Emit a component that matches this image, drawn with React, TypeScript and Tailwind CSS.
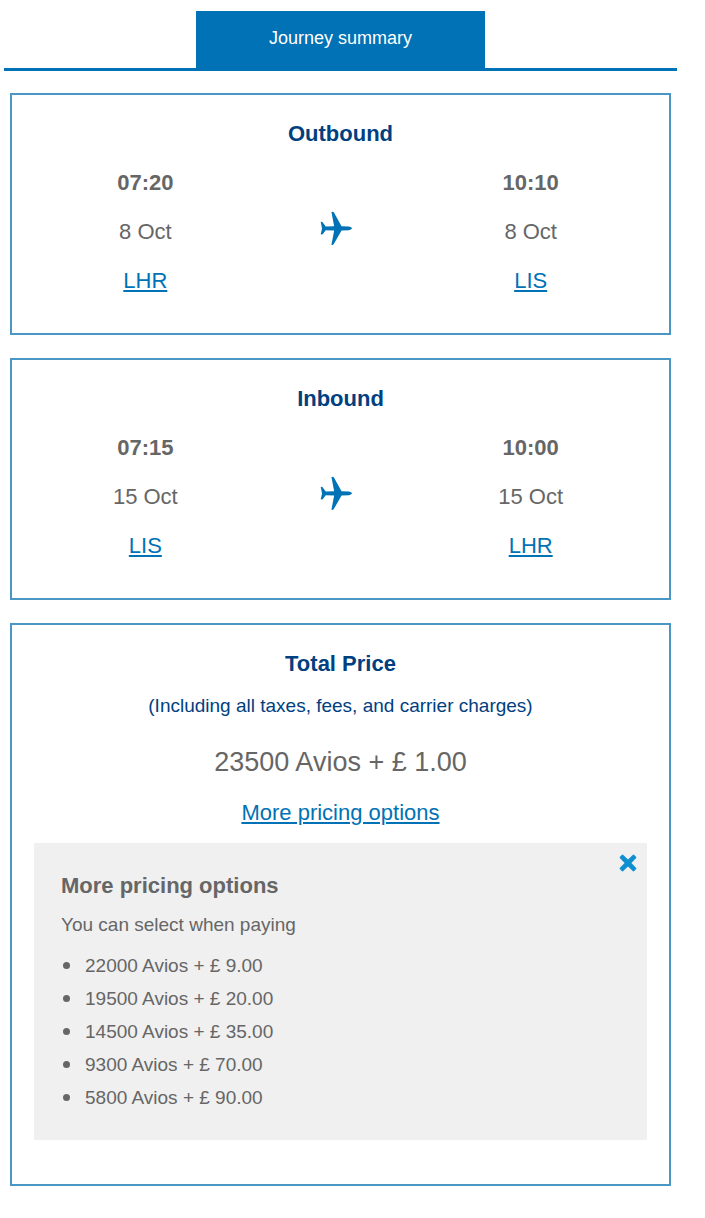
import React, { useState } from 'react';

type Stop = {
  time: string;
  date: string;
  airport: string;
};

type Leg = {
  title: string;
  from: Stop;
  to: Stop;
};

const legs: Leg[] = [
  {
    title: 'Outbound',
    from: { time: '07:20', date: '8 Oct', airport: 'LHR' },
    to: { time: '10:10', date: '8 Oct', airport: 'LIS' },
  },
  {
    title: 'Inbound',
    from: { time: '07:15', date: '15 Oct', airport: 'LIS' },
    to: { time: '10:00', date: '15 Oct', airport: 'LHR' },
  },
];

const pricingOptions = [
  '22000 Avios + £ 9.00',
  '19500 Avios + £ 20.00',
  '14500 Avios + £ 35.00',
  '9300 Avios + £ 70.00',
  '5800 Avios + £ 90.00',
];

const PlaneIcon = () => (
  <svg viewBox="60 34 98 104" className="w-[33px] h-[35px] fill-[#0072b5]" aria-hidden="true">
    <path d="M62 66 L67 67 L77 80 L102 79 L94 37 Q97 35 101 38 L124 79 L146 80 Q155 82 155 85.500 Q155 89 146 91 L124 92 L101 132 Q97 137 94 134 L102 92 L77 91 L68 103 L62 104 L66 86 Z" />
  </svg>
);

const CloseIcon = () => (
  <svg viewBox="0 0 18 18" className="w-[18px] h-[18px] fill-[#108fd0]" aria-hidden="true">
    <path d="M4 .8 L9 5.600 L14 .8 Q14.500 .4 15 .8 L17.200 3 Q17.600 3.500 17.200 4 L12.400 9 L17.200 14 Q17.600 14.500 17.200 15 L15 17.200 Q14.500 17.600 14 17.200 L9 12.400 L4 17.200 Q3.500 17.600 3 17.200 L.8 15 Q.4 14.500 .8 14 L5.600 9 L.8 4 Q.4 3.500 .8 3 L3 .8 Q3.500 .4 4 .8 Z" />
  </svg>
);

const Card: React.FC<React.PropsWithChildren<{ title: string }>> = ({ title, children }) => (
  <section className="border-2 border-[#4a96c4] pt-[25px] text-center">
    <h2 className="text-[22px] leading-7 font-bold text-[#00407f]">{title}</h2>
    {children}
  </section>
);

const StopColumn = ({ stop }: { stop: Stop }) => (
  <div className="flex flex-col items-center gap-[21px] text-[22px] leading-7">
    <strong>{stop.time}</strong>
    <span>{stop.date}</span>
    <a href="#airport" className="text-[#0072b5] underline">
      {stop.airport}
    </a>
  </div>
);

const LegCard = ({ leg }: { leg: Leg }) => (
  <Card title={leg.title}>
    <div className="grid grid-cols-3 mt-[21px] pl-[37px] pr-[42px] pb-[38px]">
      <StopColumn stop={leg.from} />
      <div className="flex justify-center pt-[42px] pr-0.5">
        <PlaneIcon />
      </div>
      <StopColumn stop={leg.to} />
    </div>
  </Card>
);

export default function App() {
  const [showOptions, setShowOptions] = useState(true);

  return (
    <main className="bg-white pt-[11px] pl-1 pr-7 pb-8 font-['Liberation_Sans',Arial,sans-serif] text-[#666]">
      <header className="flex justify-center border-b-3 border-[#0072b5]">
        <h1 className="w-[43%] bg-[#0072b5] text-center text-lg leading-[55px] pb-0.5 text-white">Journey summary</h1>
      </header>

      <div className="flex flex-col gap-[23px] mt-[22px] mx-1.5">
        {legs.map((leg) => (
          <LegCard key={leg.title} leg={leg} />
        ))}

        <Card title="Total Price">
          <p className="mt-3.5 text-[19px] leading-7 text-[#00407f]">
            (Including all taxes, fees, and carrier charges)
          </p>
          <p className="mt-6 text-[27px] leading-9">23500 Avios + £ 1.00</p>
          <button
            type="button"
            aria-expanded={showOptions}
            onClick={() => setShowOptions(!showOptions)}
            className="block mx-auto mt-[19px] text-[22px] leading-7 text-[#0072b5] underline cursor-pointer"
          >
            More pricing options
          </button>

          {showOptions && (
            <div className="relative mt-4 mx-[22px] mb-11 bg-[#f0f0f0] pt-[29px] px-[27px] pb-[26px] text-left">
              <button
                type="button"
                aria-label="Close"
                onClick={() => setShowOptions(false)}
                className="absolute top-[11px] right-2.5 cursor-pointer"
              >
                <CloseIcon />
              </button>
              <h3 className="text-[22px] leading-7 font-bold">More pricing options</h3>
              <p className="mt-[11px] text-[19px] leading-7">You can select when paying</p>
              <ul className="mt-2.5 pl-0.5 text-[19px] leading-[33px]">
                {pricingOptions.map((option) => (
                  <li key={option} className="flex items-center gap-[15px]">
                    <span className="size-[7px] rounded-full bg-[#666]" />
                    {option}
                  </li>
                ))}
              </ul>
            </div>
          )}
        </Card>
      </div>
    </main>
  );
}
